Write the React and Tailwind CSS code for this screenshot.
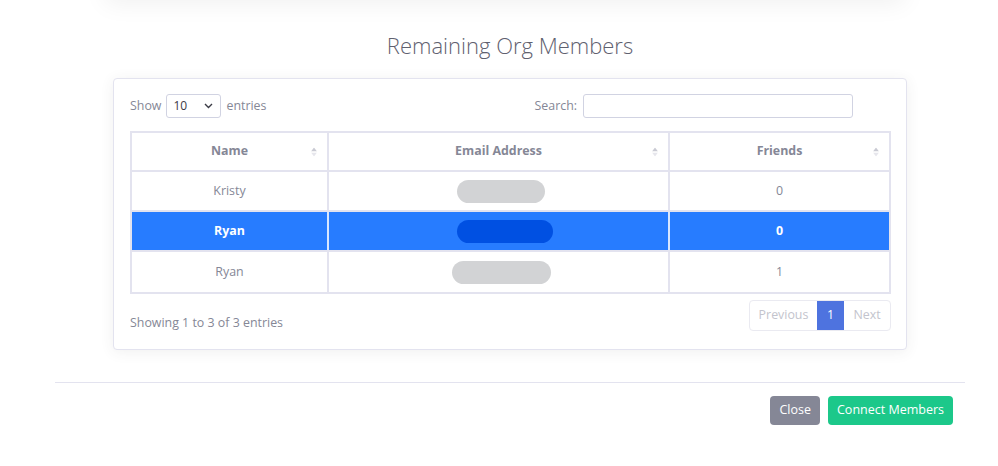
const rows = [
  { name: 'Kristy', pill: 'w-[88px] ml-[128px]', friends: 0 },
  { name: 'Ryan', pill: 'w-[96px] ml-[128px]', friends: 0, active: true },
  { name: 'Ryan', pill: 'w-[99px] ml-[123px]', friends: 1 },
];

function SortIcon() {
  return (
    <span className="absolute right-[10px] top-1/2 -translate-y-1/2 flex flex-col gap-[1px]">
      <svg width="6" height="4" viewBox="0 0 6 4"><path d="M3 0L6 4H0z" fill="#c9cad3" /></svg>
      <svg width="6" height="4" viewBox="0 0 6 4"><path d="M0 0h6L3 4z" fill="#e6e6ec" /></svg>
    </span>
  );
}

export default function App() {
  return (
    <div className="w-[998px] h-[466px] bg-white overflow-hidden text-[12.4px] text-[#858796]" style={{ fontFamily: '"Open Sans", "Noto Sans", sans-serif' }}>
      {/* card above, cut off by the viewport */}
      <div className="mx-auto w-[800px] h-[40px] -mt-[40px] translate-x-[6px] bg-white shadow-[0_4px_24px_rgba(0,0,0,0.06)]" />

      <div className="ml-[55px] w-[910px]">
        <h2 className="mt-[29px] text-center text-[22px] leading-[32px] font-light text-[#5f616f]">Remaining Org Members</h2>

        {/* table card */}
        <div className="mx-[58px] mt-[17px] h-[272px] bg-white border border-[#e3e3ef] rounded-[4px] shadow-[0_2px_14px_rgba(58,59,69,0.08)] px-[16px] pt-[15px]">
          <div className="flex items-center h-[24px]">
            <span>Show</span>
            <div className="ml-[5px] w-[55px] h-[24px] border border-[#d1d3e2] rounded-[3px] flex items-center justify-between pl-[6px] pr-[7px] text-[12px] text-[#3a3b45]">
              <span>10</span>
              <svg width="9" height="6" viewBox="0 0 9 6"><path d="M1 1l3.5 3.5L8 1" stroke="#3a3b45" strokeWidth="1.4" fill="none" /></svg>
            </div>
            <span className="ml-[5px]">entries</span>
            <span className="ml-auto mr-[6px]">Search:</span>
            <div className="w-[270px] h-[24px] border border-[#d1d3e2] rounded-[3px] mr-[37px]" />
          </div>

          <div className="mt-[13px] w-[761px] border-2 border-[#e3e3ef]">
            <div className="flex h-[39px] font-bold text-[#858796] border-b-2 border-[#e3e3ef]">
              <div className="relative w-[197px] flex items-center justify-center border-r-2 border-[#e3e3ef]">Name<SortIcon /></div>
              <div className="relative w-[341px] flex items-center justify-center border-r-2 border-[#e3e3ef]">Email Address<SortIcon /></div>
              <div className="relative flex-1 flex items-center justify-center">Friends<SortIcon /></div>
            </div>
            {rows.map((r, i) => (
              <div key={i} className={`flex h-[40px] ${i < rows.length - 1 ? 'border-b-2 border-[#e3e3ef]' : ''} ${r.active ? 'bg-[#277cff] text-white font-bold' : 'text-[#858796]'}`}>
                <div className={`w-[197px] flex items-center justify-center border-r-2 ${r.active ? 'border-[#d7e6ff]' : 'border-[#e3e3ef]'}`}>{r.name}</div>
                <div className={`w-[341px] flex items-center border-r-2 ${r.active ? 'border-[#d7e6ff]' : 'border-[#e3e3ef]'}`}>
                  <div className={`${r.pill} h-[23px] rounded-full ${r.active ? 'bg-[#0050e2]' : 'bg-[#d2d3d5]'}`} />
                </div>
                <div className="flex-1 flex items-center justify-center">{r.friends}</div>
              </div>
            ))}
          </div>

          <div className="flex items-start justify-between w-[761px] mt-[6px]">
            <span className="mt-[14px]">Showing 1 to 3 of 3 entries</span>
            <div className="flex h-[31px] border border-[#eaeaf1] rounded-[4px] text-[#c3c4cd] overflow-hidden">
              <span className="w-[67px] flex items-center justify-center">Previous</span>
              <span className="w-[27px] flex items-center justify-center bg-[#4e73df] text-white">1</span>
              <span className="w-[46px] flex items-center justify-center">Next</span>
            </div>
          </div>
        </div>

        <div className="mt-[32px] border-t border-[#e3e3ef]" />
        <div className="flex justify-end gap-[8px] pt-[13px] pr-[12px]">
          <button className="h-[29px] px-[9px] rounded-[4px] bg-[#858796] text-white text-[12.5px]">Close</button>
          <button className="h-[29px] px-[9px] rounded-[4px] bg-[#1cc88a] text-white text-[12.5px]">Connect Members</button>
        </div>
      </div>
    </div>
  );
}
